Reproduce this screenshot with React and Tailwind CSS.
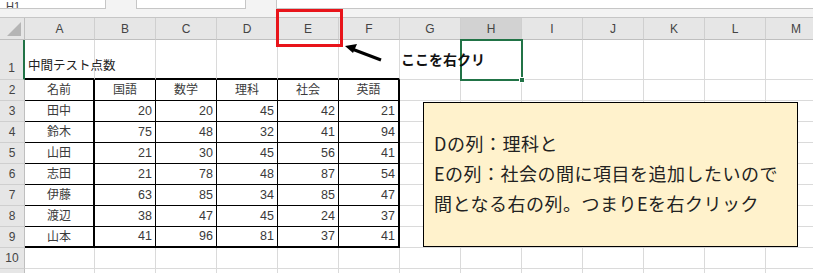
import React from 'react';

const cols = ['A', 'B', 'C', 'D', 'E', 'F', 'G', 'H', 'I', 'J', 'K', 'L', 'M'];

const data = [
    ['名前', '国語', '数学', '理科', '社会', '英語'],
    ['田中', 20, 20, 45, 42, 21],
    ['鈴木', 75, 48, 32, 41, 94],
    ['山田', 21, 30, 45, 56, 41],
    ['志田', 21, 78, 48, 87, 54],
    ['伊藤', 63, 85, 34, 85, 47],
    ['渡辺', 38, 47, 45, 24, 37],
    ['山本', 41, 96, 81, 37, 41],
];

function cellBorder(r, c) {
    if (r >= 2 && r <= 9 && c <= 5) {
        const right = c === 0 || c === 5 ? 'border-r-2' : 'border-r';
        const bottom = r === 9 ? 'border-b-2' : 'border-b';
        return `${right} ${bottom} border-black`;
    }
    if (r === 1 && c <= 5) return 'border-r border-b-2 border-r-[#dadada] border-b-black';
    return 'border-r border-b border-[#dadada]';
}

function Cell({ r, c }) {
    let content = null;
    if (r === 1 && c === 0) {
        content = (
            <span className="relative z-10 whitespace-nowrap pl-[3px] pb-[2px] text-[12.5px] text-[#222]">
                中間テスト点数
            </span>
        );
    } else if (r === 1 && c === 6) {
        content = (
            <span className="relative z-10 self-center whitespace-nowrap pl-[1px] pt-[2px] text-[14px] font-bold text-[#111]">
                ここを右クリ
            </span>
        );
    } else if (r >= 2 && r <= 9 && c <= 5) {
        const v = data[r - 2][c];
        const isNum = typeof v === 'number';
        content = (
            <span
                className={
                    isNum
                        ? 'w-full self-center pr-[3px] text-right text-[12.5px] text-[#3a3a3a]'
                        : 'w-full self-center text-center text-[12px] text-[#3a3a3a]'
                }
            >
                {v}
            </span>
        );
    }
    const align = r === 1 ? 'items-end' : 'items-center';
    return <div className={`flex bg-white ${align} ${cellBorder(r, c)}`}>{content}</div>;
}

function RowHeader({ r }) {
    const isSel = r === 1;
    return (
        <div
            className={
                isSel
                    ? 'flex items-end justify-center border-b border-r-2 border-b-[#cfcfcf] border-r-[#217346] bg-[#e6e6e6] pb-[2px] text-[12px] text-[#444]'
                    : 'flex items-center justify-center border-b border-r border-b-[#cfcfcf] border-r-[#bfbfbf] bg-[#e6e6e6] text-[12px] text-[#444]'
            }
        >
            {r <= 10 ? r : null}
        </div>
    );
}

function ColHeader({ name }) {
    return (
        <div
            className={
                name === 'H'
                    ? 'flex items-center justify-center border-b border-r border-b-[#bfbfbf] border-r-[#cfcfcf] bg-[#d2d2d2] text-[12px] text-[#444]'
                    : 'flex items-center justify-center border-b border-r border-b-[#bfbfbf] border-r-[#cfcfcf] bg-[#e6e6e6] text-[12px] text-[#444]'
            }
        >
            {name}
        </div>
    );
}

export default function App() {
    const rows = [1, 2, 3, 4, 5, 6, 7, 8, 9, 10, 11];
    return (
        <div
            className="relative h-[273px] w-[813px] overflow-hidden bg-[#f3f3f3]"
            style={{ fontFamily: '"Liberation Sans", "Noto Sans CJK JP", sans-serif' }}
        >
            {/* formula bar strip */}
            <div className="flex h-[18px] gap-[30px] border-b border-[#c6c6c6]">
                <div className="flex h-[9px] w-[106px] items-end overflow-hidden border-b border-r border-[#c6c6c6] bg-white pl-[6px] text-[11px] leading-[11px] text-[#444]">
                    <span className="-mb-[4px]">H1</span>
                </div>
                <div className="h-[9px] w-[110px] border-b border-l border-r border-[#c6c6c6] bg-white" />
                <div className="h-[9px] flex-1 border-b border-l border-[#c6c6c6] bg-white" />
            </div>

            <div className="grid w-max grid-cols-[25px_70px_repeat(12,61px)] grid-rows-[22px_40px_repeat(10,21px)]">
                <div className="flex items-end justify-end border-b border-r border-[#bfbfbf] bg-[#e6e6e6] p-[3px]">
                    <svg width="14" height="14" viewBox="0 0 14 14">
                        <polygon points="14,0 14,14 0,14" fill="#b5b5b5" />
                    </svg>
                </div>
                {cols.map((c) => (
                    <ColHeader key={c} name={c} />
                ))}
                {rows.map((r) => (
                    <React.Fragment key={r}>
                        <RowHeader r={r} />
                        {cols.map((c, ci) => (
                            <Cell key={c} r={r} c={ci} />
                        ))}
                    </React.Fragment>
                ))}
            </div>

            {/* selected cell H1 */}
            <div className="pointer-events-none absolute left-[460px] top-[39px] h-[42px] w-[63px] border-2 border-[#217346]">
                <div className="absolute -bottom-[4px] -right-[4px] h-[6px] w-[6px] border border-white bg-[#217346]" />
            </div>

            {/* red highlight on column E */}
            <div className="pointer-events-none absolute left-[276px] top-[9px] h-[38px] w-[67px] border-[3px] border-[#e8141a]" />

            {/* arrow */}
            <svg className="pointer-events-none absolute left-0 top-0" width="813" height="273">
                <line x1="381" y1="60" x2="352" y2="49" stroke="#000" strokeWidth="3" />
                <polygon points="345,46 357,44 353,53" fill="#000" />
            </svg>

            {/* note box */}
            <div
                className="absolute left-[423px] top-[102px] h-[145px] w-[375px] border border-black bg-[#fff2cc] pl-[10px] pt-[25px] text-[18px] leading-[30px] tracking-[0.5px] text-[#222]"
                style={{ fontFamily: '"Noto Sans CJK JP", sans-serif' }}
            >
                <div>Dの列：理科と</div>
                <div>Eの列：社会の間に項目を追加したいので</div>
                <div>間となる右の列。つまりEを右クリック</div>
            </div>
        </div>
    );
}
